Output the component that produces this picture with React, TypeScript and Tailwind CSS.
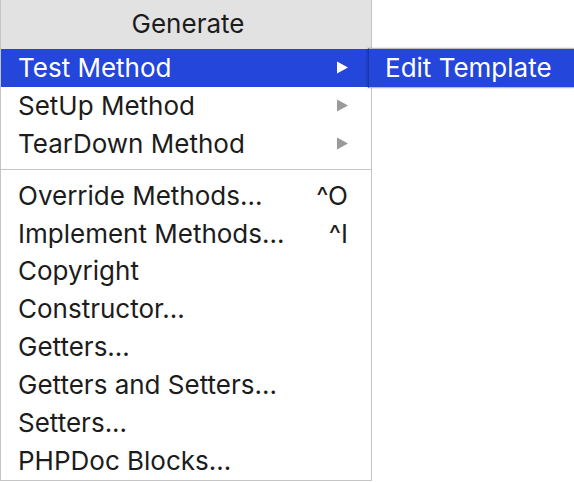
import React from "react";

type Item = { label: string; shortcut?: string; submenu?: boolean; active?: boolean };

const top: Item[] = [
  { label: "Test Method", submenu: true, active: true },
  { label: "SetUp Method", submenu: true },
  { label: "TearDown Method", submenu: true },
];

const rest: Item[] = [
  { label: "Override Methods...", shortcut: "^O" },
  { label: "Implement Methods...", shortcut: "^I" },
  { label: "Copyright" },
  { label: "Constructor..." },
  { label: "Getters..." },
  { label: "Getters and Setters..." },
  { label: "Setters..." },
  { label: "PHPDoc Blocks..." },
];

const Arrow = ({ active }: { active?: boolean }) => (
  <svg width="11" height="13" viewBox="0 0 11 13" className="shrink-0">
    <path d="M0 0.5 L11 6.5 L0 12.5 Z" fill={active ? "#ffffff" : "#9a9a9a"} />
  </svg>
);

const Row = ({ item }: { item: Item }) => (
  <div
    className={
      "h-[38px] flex items-center pl-[17px] pr-[23px] " +
      (item.active ? "bg-[#2446da] text-white" : "text-[#1c1c1c]")
    }
  >
    <span className="flex-1 whitespace-pre">{item.label}</span>
    {item.submenu && <Arrow active={item.active} />}
    {item.shortcut && <span className="whitespace-pre">{item.shortcut}</span>}
  </div>
);

export default function App() {
  return (
    <div
      className="relative w-[574px] h-[482px] bg-white overflow-hidden text-[26px] leading-none"
      style={{ fontFamily: "Inter, 'Liberation Sans', sans-serif" }}
    >
      <div className="w-[372px] h-[481px] border-l border-r border-b border-[#c4c4c4] bg-white flex flex-col">
        <div className="h-[49px] bg-[#e2e2e2] flex items-center justify-center text-[#1c1c1c] pl-[4px]">
          Generate
        </div>
        {top.map((it) => (
          <Row key={it.label} item={it} />
        ))}
        <div className="h-[14px] flex items-center">
          <div className="h-px w-full bg-[#c4c4c4]" />
        </div>
        {rest.map((it) => (
          <Row key={it.label} item={it} />
        ))}
      </div>

      {/* submenu */}
      <div className="absolute left-[368px] top-[48px] w-[206px] h-[40px] border-t border-b border-[#bdbdbd] border-l border-l-[#1b35a8] bg-[#2446da] text-white flex items-center pl-[16px] shadow-[-1px_0_2px_rgba(0,0,0,0.2)]">
        <span className="whitespace-pre">Edit Template</span>
      </div>
    </div>
  );
}
